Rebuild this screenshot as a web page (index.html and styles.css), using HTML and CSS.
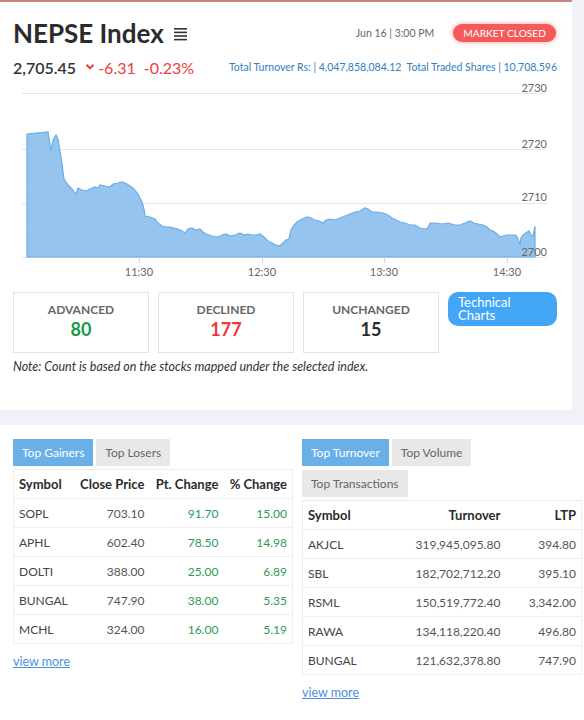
FILE: index.html
```html
<!DOCTYPE html>
<html lang="en">
<head>
  <meta charset="UTF-8">
  <title>NEPSE Index</title>
  <meta name="viewport" content="width=device-width, initial-scale=1.0">
  <link rel="stylesheet" href="styles.css">
</head>
<body>
  <div class="card">
    <div class="head">
      <h1>NEPSE Index</h1>
      <svg class="menu" width="14" height="13" viewBox="0 0 14 13">
        <rect x="0" y="0" width="13" height="1.6" fill="#333"/>
        <rect x="0" y="3.6" width="13" height="1.6" fill="#333"/>
        <rect x="0" y="7.2" width="13" height="1.6" fill="#333"/>
        <rect x="0" y="10.8" width="13" height="1.6" fill="#333"/>
      </svg>
      <span class="date">Jun 16 | 3:00 PM</span>
      <span class="badge">MARKET CLOSED</span>
    </div>

    <div class="quote">
      <span class="last">2,705.45</span>
      <svg class="chev" width="10" height="8" viewBox="0 0 10 8"><path d="M1.5 1.8 L5 5.3 L8.5 1.8" fill="none" stroke="#ee3b3b" stroke-width="2"/></svg>
      <span class="neg">-6.31</span>
      <span class="neg">-0.23%</span>
      <span class="totals">Total Turnover Rs: | 4,047,858,084.12&nbsp;&nbsp;Total Traded Shares | 10,708,596</span>
    </div>

    <svg class="chart" width="572" height="200" viewBox="0 80 572 200">
      <g stroke="#e6e6e6" stroke-width="1">
        <line x1="22" y1="94.5" x2="547" y2="94.5"/>
        <line x1="22" y1="150.5" x2="547" y2="150.5"/>
        <line x1="22" y1="204.5" x2="547" y2="204.5"/>
        <line x1="22" y1="258.5" x2="547" y2="258.5"/>
      </g>
      <path class="area" d="M27,258 L27,135 L48,133 L50,145 L51,152 L53,141 L56,136 L58,140 L61,158 L64,180 L68,186 L72,190 L76,195 L78,189 L82,191 L86,192 L90,190 L95,188 L98,189 L100,186 L105,187 L110,188 L113,185 L118,184 L122,183 L127,185 L130,187 L134,190 L138,195 L142,203 L144,210 L145,217 L150,218 L155,220 L158,224 L162,227 L166,228 L170,228 L174,229 L178,230 L182,232 L185,234 L188,230 L192,229 L196,231 L200,230 L203,233 L206,235 L212,237 L218,238 L222,236 L226,235 L230,237 L235,236 L240,234 L244,236 L248,235 L252,236 L256,236 L260,235 L264,238 L268,242 L272,244 L276,246 L279,247 L282,245 L286,241 L289,240 L291,231 L294,226 L297,223 L302,220 L307,218 L311,219 L315,221 L319,222 L323,224 L326,221 L330,220 L335,221 L340,219 L345,217 L350,215 L355,213 L360,212 L365,209 L368,210 L372,213 L377,213 L383,214 L388,216 L392,219 L396,221 L400,223 L405,224 L410,226 L415,226 L420,229 L425,230 L428,229 L430,224 L436,224 L442,225 L448,224 L455,226 L460,226 L465,224 L470,222 L474,224 L478,225 L483,226 L487,228 L490,231 L493,232 L496,234 L500,238 L503,237 L507,236 L512,236 L516,236 L518,240 L520,245 L521,239 L523,236 L526,234 L529,232 L531,236 L533,237 L535,227 L535,258 Z"/>
      <g stroke="#ccd6eb" stroke-width="1">
        <line x1="139.5" y1="258" x2="139.5" y2="264"/>
        <line x1="262.5" y1="258" x2="262.5" y2="264"/>
        <line x1="384.5" y1="258" x2="384.5" y2="264"/>
        <line x1="507.5" y1="258" x2="507.5" y2="264"/>
      </g>
      <g class="ylab" text-anchor="end">
        <text x="547" y="93">2730</text>
        <text x="547" y="149">2720</text>
        <text x="547" y="202">2710</text>
        <text x="547" y="257">2700</text>
      </g>
      <g class="xlab" text-anchor="middle">
        <text x="139" y="277">11:30</text>
        <text x="262" y="277">12:30</text>
        <text x="384" y="277">13:30</text>
        <text x="507" y="277">14:30</text>
      </g>
    </svg>

    <div class="stats">
      <div class="stat">
        <div class="label">ADVANCED</div>
        <div class="value up">80</div>
      </div>
      <div class="stat">
        <div class="label">DECLINED</div>
        <div class="value down">177</div>
      </div>
      <div class="stat">
        <div class="label">UNCHANGED</div>
        <div class="value">15</div>
      </div>
      <a class="tech" href="#">Technical Charts</a>
    </div>

    <p class="note">Note: Count is based on the stocks mapped under the selected index.</p>
  </div>

  <div class="lists">
    <div class="col">
      <div class="tabs">
        <span class="tab active">Top Gainers</span>
        <span class="tab">Top Losers</span>
      </div>
      <table>
        <tr><th class="l">Symbol</th><th>Close Price</th><th>Pt. Change</th><th>% Change</th></tr>
        <tr><td class="l">SOPL</td><td>703.10</td><td class="g">91.70</td><td class="g">15.00</td></tr>
        <tr><td class="l">APHL</td><td>602.40</td><td class="g">78.50</td><td class="g">14.98</td></tr>
        <tr><td class="l">DOLTI</td><td>388.00</td><td class="g">25.00</td><td class="g">6.89</td></tr>
        <tr><td class="l">BUNGAL</td><td>747.90</td><td class="g">38.00</td><td class="g">5.35</td></tr>
        <tr><td class="l">MCHL</td><td>324.00</td><td class="g">16.00</td><td class="g">5.19</td></tr>
      </table>
      <a class="more" href="#">view more</a>
    </div>

    <div class="col">
      <div class="tabs narrow">
        <span class="tab active">Top Turnover</span>
        <span class="tab">Top Volume</span>
        <span class="tab">Top Transactions</span>
      </div>
      <table>
        <tr><th class="l">Symbol</th><th>Turnover</th><th>LTP</th></tr>
        <tr><td class="l">AKJCL</td><td>319,945,095.80</td><td>394.80</td></tr>
        <tr><td class="l">SBL</td><td>182,702,712.20</td><td>395.10</td></tr>
        <tr><td class="l">RSML</td><td>150,519,772.40</td><td>3,342.00</td></tr>
        <tr><td class="l">RAWA</td><td>134,118,220.40</td><td>496.80</td></tr>
        <tr><td class="l">BUNGAL</td><td>121,632,378.80</td><td>747.90</td></tr>
      </table>
      <a class="more" href="#">view more</a>
    </div>
  </div>
</body>
</html>
```

FILE: styles.css
```css
body {
  margin: 0;
  background: #f0f2f7;
  font-family: Lato, "Noto Sans", sans-serif;
  color: #333;
}
.card {
  width: 572px;
  box-sizing: border-box;
  background: #fff;
  border-top: 2px solid #c98686;
  padding: 16px 13px 0;
  height: 410px;
}
.head {
  display: flex;
  align-items: center;
  height: 30px;
}
.head h1 {
  margin: 0;
  font-size: 26px;
  font-weight: 700;
  color: #2b2b2b;
}
.menu {
  margin-left: 10px;
  margin-top: 2px;
}
.date {
  margin-left: auto;
  font-size: 10.5px;
  color: #666;
}
.badge {
  margin-left: 19px;
  margin-right: 3px;
  background: #f35b5b;
  color: #fff;
  font-size: 10.2px;
  padding: 3px 10px;
  border-radius: 10px;
  box-shadow: 0 0 5px rgba(243, 91, 91, 0.6);
}
.quote {
  display: flex;
  align-items: center;
  margin-top: 8px;
  height: 22px;
}
.last {
  font-size: 16px;
  font-weight: 600;
  color: #333;
}
.chev {
  margin-left: 9px;
  margin-right: 3px;
}
.neg {
  font-size: 16px;
  color: #ee3b3b;
  margin-right: 8px;
}
.totals {
  margin-left: auto;
  margin-right: 2px;
  font-size: 10.5px;
  color: #2f7fc1;
}
.chart {
  display: block;
  margin: 1px 0 0 -13px;
}
.chart .area {
  fill: #95c4ef;
  stroke: #6aade8;
  stroke-width: 1.2;
}
.chart text {
  font-family: Lato, "Noto Sans", sans-serif;
  font-size: 11px;
  fill: #666;
}
.stats {
  display: flex;
  gap: 9px;
  margin-top: 13px;
  align-items: flex-start;
}
.stat {
  width: 136px;
  height: 61px;
  box-sizing: border-box;
  border: 1px solid #e3e3e3;
  text-align: center;
  padding-top: 9px;
}
.stat .label {
  font-size: 12px;
  font-weight: 700;
  color: #666;
}
.stat .value {
  font-size: 18px;
  font-weight: 700;
  color: #2b2b2b;
  margin-top: 1px;
}
.stat .value.up {
  color: #1a9a4a;
}
.stat .value.down {
  color: #f0363d;
}
.tech {
  width: 109px;
  height: 34px;
  box-sizing: border-box;
  background: #42a5f5;
  color: #fff;
  text-decoration: none;
  font-size: 13px;
  line-height: 13px;
  padding: 4px 10px;
  border-radius: 10px;
}
.note {
  margin: 6px 0 0;
  font-size: 12.5px;
  font-style: italic;
  color: #333;
}
.lists {
  display: flex;
  gap: 9px;
  background: #fff;
  margin-top: 15px;
  padding: 14px 0 40px 13px;
}
.col {
  width: 280px;
}
.tabs {
  display: flex;
  flex-wrap: wrap;
  gap: 4px 3px;
}
.tabs.narrow {
  width: 180px;
}
.tab {
  font-size: 12px;
  color: #666;
  background: #e8e8e8;
  padding: 0 9px;
  height: 27px;
  line-height: 27px;
}
.tab.active {
  background: #6ab0e8;
  color: #fff;
}
table {
  width: 100%;
  border-collapse: collapse;
  border: 1px solid #eee;
  margin-top: 3px;
  font-size: 12px;
}
th, td {
  text-align: right;
  padding: 0 5px;
  height: 28px;
  border-bottom: 1px solid #eee;
}
th {
  font-weight: 700;
  color: #2b2b2b;
  font-size: 13px;
}
td {
  color: #555;
}
th.l, td.l {
  text-align: left;
}
td.l {
  color: #444;
}
td.g {
  color: #2c9a56;
}
.more {
  display: inline-block;
  margin-top: 10px;
  font-size: 12.5px;
  color: #4a90e2;
}
```
